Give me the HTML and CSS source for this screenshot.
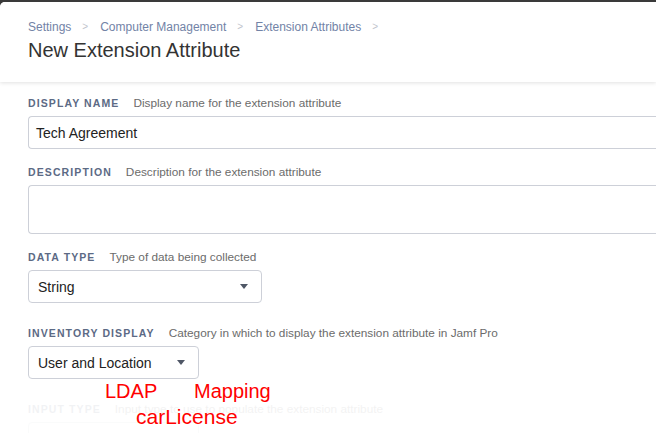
FILE: index.html
```html
<!DOCTYPE html>
<html>
<head>
<meta charset="utf-8">
<link rel="stylesheet" href="styles.css">
</head>
<body>
<div class="frame">
  <header class="head">
    <nav class="crumbs">
      <span class="crumb">Settings</span><span class="sep">&gt;</span>
      <span class="crumb">Computer Management</span><span class="sep">&gt;</span>
      <span class="crumb">Extension Attributes</span><span class="sep">&gt;</span>
    </nav>
    <h1 class="title">New Extension Attribute</h1>
  </header>
  <main class="form">
    <div class="field">
      <div class="lab"><span class="name">Display Name</span><span class="hint">Display name for the extension attribute</span></div>
      <div class="input">Tech Agreement</div>
    </div>
    <div class="field">
      <div class="lab"><span class="name">Description</span><span class="hint">Description for the extension attribute</span></div>
      <div class="input area"></div>
    </div>
    <div class="field gap">
      <div class="lab"><span class="name">Data Type</span><span class="hint">Type of data being collected</span></div>
      <div class="select w1"><span>String</span><span class="caret"></span></div>
    </div>
    <div class="field gap">
      <div class="lab"><span class="name">Inventory Display</span><span class="hint">Category in which to display the extension attribute in Jamf Pro</span></div>
      <div class="select w2"><span>User and Location</span><span class="caret"></span></div>
    </div>
    <div class="field faded">
      <div class="lab"><span class="name">Input Type</span><span class="hint">Input type to use to populate the extension attribute</span></div>
      <div class="select w2"></div>
    </div>
    <div class="note n1">LDAP</div>
    <div class="note n2">Mapping</div>
    <div class="note n3">carLicense</div>
  </main>
</div>
</body>
</html>
```
FILE: styles.css
```css
html, body { margin: 0; padding: 0; }
body {
  background: #3a3a3a;
  font-family: "Liberation Sans", Arial, sans-serif;
  width: 656px;
  height: 433px;
  overflow: hidden;
}
.frame {
  margin-top: 2px;
  background: #fff;
  border-top-left-radius: 5px;
  height: 431px;
  overflow: hidden;
}
.head {
  height: 80px;
  box-sizing: border-box;
  padding: 17px 28px 0;
  box-shadow: 0 1px 4px rgba(0,0,0,0.12);
  position: relative;
  background: #fff;
}
.crumbs {
  display: flex;
  align-items: center;
  font-size: 12px;
  color: #7283a6;
  line-height: 16px;
}
.sep { color: #c0c4cc; font-size: 10px; margin: 0 12px 0 11px; }
.title {
  margin: 3px 0 0;
  font-weight: normal;
  font-size: 20px;
  color: #333;
  line-height: 24px;
}
.form {
  position: relative;
  padding: 13px 0 0 28px;
}
.field { margin-bottom: 15px; }
.field.gap { margin-bottom: 22px; }
.lab {
  display: flex;
  align-items: baseline;
  height: 16px;
  line-height: 16px;
  margin-bottom: 5px;
}
.name {
  font-size: 10.5px;
  font-weight: bold;
  text-transform: uppercase;
  letter-spacing: 1.1px;
  color: #5c6a85;
  margin-right: 14px;
}
.hint { font-size: 11.8px; color: #6b6b6b; }
.input {
  height: 33px;
  box-sizing: border-box;
  border: 1px solid #cdd0d8;
  border-right: none;
  border-radius: 4px 0 0 4px;
  padding: 0 7px;
  display: flex;
  align-items: center;
  font-size: 14px;
  color: #222;
}
.input.area { height: 49px; }
.select {
  height: 33px;
  box-sizing: border-box;
  border: 1px solid #cdd0d8;
  border-radius: 4px;
  padding: 0 13px 0 9px;
  display: flex;
  align-items: center;
  justify-content: space-between;
  font-size: 14px;
  color: #222;
}
.w1 { width: 234px; }
.w2 { width: 171px; }
.caret {
  width: 0; height: 0;
  border-left: 4.5px solid transparent;
  border-right: 4.5px solid transparent;
  border-top: 5px solid #4f5766;
}
.faded { opacity: 0.08; }
.note {
  position: absolute;
  color: #ff0000;
  font-size: 20px;
  font-family: "Liberation Sans", Arial, sans-serif;
  line-height: 22px;
}
.n1 { left: 105px; top: 298px; }
.n2 { left: 194px; top: 298px; }
.n3 { left: 136px; top: 324px; font-size: 21px; }
```
